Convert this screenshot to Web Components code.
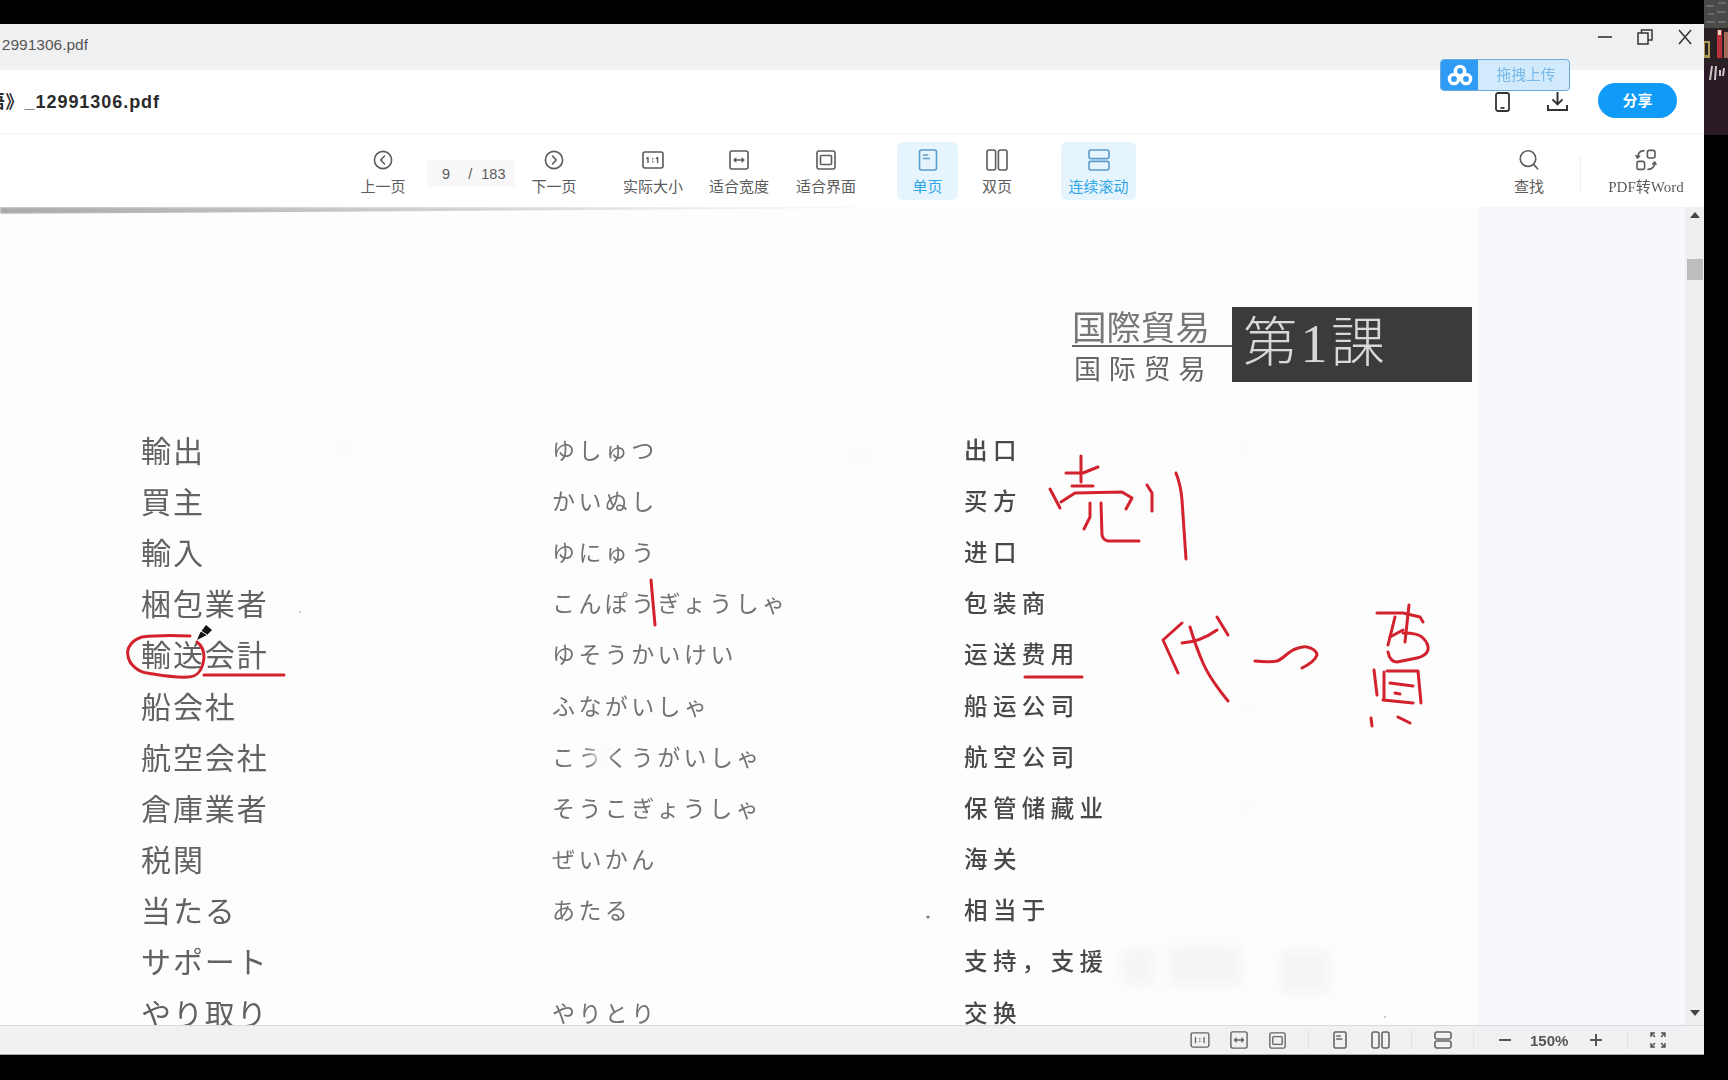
<!DOCTYPE html>
<html lang="zh">
<head>
<meta charset="utf-8">
<title>PDF</title>
<style>
  html, body { margin: 0; height: 1080px; overflow: hidden; background: #000; }
  body { display: flex; align-items: flex-start; font-family: "Liberation Sans", "Noto Sans CJK SC", sans-serif; }
</style>
</head>
<body>
<pdf-window></pdf-window>
<video-thumb></video-thumb>

<script>
const line = 'fill="none" stroke="currentColor" stroke-width="1.6" stroke-linecap="round" stroke-linejoin="round"'
const ICONS = {
  prev: `<svg width="20" height="20" viewBox="0 0 20 20" ${line}><circle cx="10" cy="10" r="8.6"/><path d="M11.5 6 7.8 10l3.7 4"/></svg>`,
  next: `<svg width="20" height="20" viewBox="0 0 20 20" ${line}><circle cx="10" cy="10" r="8.6"/><path d="M8.5 6l3.7 4-3.7 4"/></svg>`,
  actual: `<svg width="22" height="18" viewBox="0 0 22 18" ${line}><rect x="1" y="1" width="20" height="16" rx="2"/><path stroke-width="1.4" d="M6 6.5v5M15.6 6.5v5M10.8 7.4v.4M10.8 10.4v.4M4.8 7.4 6 6.5M14.4 7.4l1.2-.9"/></svg>`,
  fitw: `<svg width="20" height="20" viewBox="0 0 20 20" ${line}><rect x="1" y="1" width="18" height="18" rx="2"/><path stroke-width="1.3" d="M5 10h10M7 8.2 5 10l2 1.8M13 8.2l2 1.8-2 1.8"/></svg>`,
  fit: `<svg width="20" height="20" viewBox="0 0 20 20" ${line}><rect x="1" y="1" width="18" height="18" rx="2"/><rect x="4.5" y="5.5" width="11" height="9" rx="1"/></svg>`,
  single: `<svg width="20" height="22" viewBox="0 0 20 22" ${line}><rect x="1.5" y="1" width="17" height="20" rx="2"/><path d="M5.5 6h4M5.5 9.5h6"/></svg>`,
  double: `<svg width="22" height="22" viewBox="0 0 22 22" ${line}><rect x="1" y="1" width="8.6" height="20" rx="2"/><rect x="12.4" y="1" width="8.6" height="20" rx="2"/></svg>`,
  cont: `<svg width="22" height="22" viewBox="0 0 22 22" ${line}><rect x="1" y="1" width="20" height="8.6" rx="2"/><rect x="1" y="12.4" width="20" height="8.6" rx="2"/></svg>`,
  search: `<svg width="22" height="22" viewBox="0 0 22 22" ${line}><circle cx="10" cy="9.6" r="7.8"/><path d="m15.6 15.4 4 4.4"/></svg>`,
  word: `<svg width="22" height="22" viewBox="0 0 22 22" ${line}><rect x="12.4" y="1.4" width="7.6" height="7.6" rx="2"/><rect x="2" y="12.4" width="7.6" height="8" rx="2"/><path d="M9 1.6C5.6 1.6 3 3.6 2.6 8.6M13 20.4c3.6 0 6.4-2 6.8-7"/><path d="M1 6.6l1.6 2.4 2-2M21 15.4l-1.4-2.2-2 1.8"/></svg>`,
  phone: `<svg width="15" height="20" viewBox="0 0 15 20" fill="none" stroke="#333" stroke-width="1.8"><rect x="1" y="1" width="13" height="18" rx="2"/><path d="M5.5 16h4"/></svg>`,
  download: `<svg width="21" height="19" viewBox="0 0 21 19" fill="none" stroke="#333" stroke-width="2"><path d="M10.5 0v12M5.5 7.4l5 5 5-5M1 13v5h19v-5"/></svg>`,
  cloud: `<svg width="26" height="22" viewBox="0 0 26 22" fill="none" stroke="#fff" stroke-width="3.4"><circle cx="13" cy="7" r="4.6"/><circle cx="7" cy="15" r="4.6"/><circle cx="19" cy="15" r="4.6"/></svg>`,
  min: `<svg width="16" height="16" viewBox="0 0 16 16" fill="none" stroke="#333" stroke-width="1.6"><path d="M1 8h14"/></svg>`,
  restore: `<svg width="16" height="16" viewBox="0 0 16 16" fill="none" stroke="#333" stroke-width="1.5"><rect x="1" y="4" width="10" height="11"/><path d="M4.5 4V1H15v10h-4"/></svg>`,
  close: `<svg width="16" height="16" viewBox="0 0 16 16" fill="none" stroke="#333" stroke-width="1.5"><path d="m2 1 12 14M14 1 2 15"/></svg>`,
  full: `<svg width="16" height="16" viewBox="0 0 16 16" fill="none" stroke="#555" stroke-width="1.5"><path d="M1 5V1h4M1 1l4 4M11 1h4v4M15 1l-4 4M1 11v4h4M1 15l4-4M15 11v4h-4M15 15l-4-4"/></svg>`
}

// one button of the big toolbar: icon on top, label under it
class ToolButton extends HTMLElement {
  connectedCallback () {
    const root = this.attachShadow({ mode: 'open' })
    root.innerHTML = `
      <style>
        :host {
          display: flex;
          flex-direction: column;
          align-items: center;
          box-sizing: border-box;
          height: 58px;
          padding-top: 8px;
          border-radius: 6px;
          color: #5b5b5b;
          font-size: 15px;
        }
        :host([active]) { background: #e5f4fd; color: #2fa7e6; }
        :host([active]) .icon { color: #5c9ccb; }
        .icon { height: 20px; display: flex; align-items: center; justify-content: center; }
        .label { margin-top: 7px; line-height: 20px; white-space: nowrap; }
        :host([serif]) .label { font-family: "Liberation Serif", "Noto Sans CJK SC", serif; font-size: 15px; }
      </style>
      <div class="icon">${ICONS[this.getAttribute('icon')]}</div>
      <div class="label"><slot></slot></div>`
  }
}

class TitleBar extends HTMLElement {
  constructor () {
    super()
    this.attachShadow({ mode: 'open' }).innerHTML = `
      <style>
        :host {
          display: flex;
          height: 46px;
          box-sizing: border-box;
          padding: 5px 11px 0 0;
          background: linear-gradient(#eff0f2 60%, #f2f3f5);
          color: #555;
          font-size: 15.5px;
        }
        .name { width: 88px; height: 32px; display: flex; justify-content: flex-end; align-items: center; overflow: hidden; white-space: nowrap; }
        .ctrl { margin-left: auto; display: flex; gap: 24px; height: 16px; }
        svg { display: block; }
      </style>
      <div class="name"><slot></slot></div>
      <div class="ctrl">${ICONS.min}${ICONS.restore}${ICONS.close}</div>`
  }
}

class FileBar extends HTMLElement {
  constructor () {
    super()
    this.attachShadow({ mode: 'open' }).innerHTML = `
      <style>
        :host {
          display: flex;
          align-items: center;
          position: relative;
          height: 64px;
          box-sizing: border-box;
          padding-right: 27px;
          background: #fff;
          border-bottom: 1px solid #f3f3f3;
        }
        .name {
          width: 160px;
          margin-top: -3px;
          display: flex;
          justify-content: flex-end;
          overflow: hidden;
          white-space: nowrap;
          color: #2b2b2b;
          font-size: 18px;
          font-weight: 700;
          letter-spacing: .95px;
        }
        .side { margin-left: auto; display: flex; align-items: center; }
        .side svg { display: block; }
        .phone { margin-right: 37px; }
        .share {
          width: 79px;
          height: 35px;
          margin: -2px 0 0 30px;
          border-radius: 18px;
          background: #0f9bf7;
          color: #fff;
          font-size: 15px;
          font-weight: 700;
          line-height: 35px;
          text-align: center;
        }
        .upload {
          position: absolute;
          left: 1440px;
          top: -11px;
          width: 130px;
          height: 32px;
          box-sizing: border-box;
          display: flex;
          border: 1px solid #6aa8de;
          border-radius: 4px;
          overflow: hidden;
          background: #d2ebfc;
          color: #78b8e8;
          font-size: 14.8px;
        }
        .upload i { width: 37px; background: #2f9bf5; display: flex; align-items: center; justify-content: center; }
        .upload span { flex: 1; text-align: center; line-height: 30px; padding-left: 5px; white-space: nowrap; }
      </style>
      <div class="name"><slot></slot></div>
      <div class="side">
        <span class="phone">${ICONS.phone}</span>
        ${ICONS.download}
        <div class="share">分享</div>
      </div>
      <div class="upload"><i>${ICONS.cloud}</i><span>拖拽上传</span></div>`
  }
}

class PdfToolbar extends HTMLElement {
  constructor () {
    super()
    this.attachShadow({ mode: 'open' }).innerHTML = `
      <style>
        :host {
          display: flex;
          align-items: flex-start;
          height: 73px;
          box-sizing: border-box;
          padding: 8px 16px 0 353px;
          background: #fff;
        }
        .page {
          width: 88px;
          height: 27px;
          margin: 18px 9px 0 14px;
          display: flex;
          align-items: center;
          box-sizing: border-box;
          padding-left: 15px;
          background: #f8f8f8;
          border-radius: 3px;
          color: #5b5b5b;
          font-size: 14.5px;
          white-space: pre;
          word-spacing: .5px;
        }
        .sep { width: 1px; height: 37px; margin: 13px 23px 0 21px; background: #eee; }
        .grow { flex: 1; }
      </style>
      <tool-button icon="prev" style="width:60px">上一页</tool-button>
      <div class="page">9    /  183</div>
      <tool-button icon="next" style="width:60px">下一页</tool-button>
      <tool-button icon="actual" style="width:72px;margin-left:33px">实际大小</tool-button>
      <tool-button icon="fitw" style="width:80px;margin-left:10px">适合宽度</tool-button>
      <tool-button icon="fit" style="width:80px;margin-left:7px">适合界面</tool-button>
      <tool-button icon="single" active style="width:61px;margin-left:31px">单页</tool-button>
      <tool-button icon="double" style="width:60px;margin-left:9px">双页</tool-button>
      <tool-button icon="cont" active style="width:75px;margin-left:34px">连续滚动</tool-button>
      <div class="grow"></div>
      <tool-button icon="search" style="width:60px">查找</tool-button>
      <div class="sep"></div>
      <tool-button icon="word" serif style="width:84px">PDF转Word</tool-button>`
  }
}

class ChapterHead extends HTMLElement {
  constructor () {
    super()
    this.attachShadow({ mode: 'open' }).innerHTML = `
      <style>
        :host { display: flex; justify-content: flex-end; height: 75px; padding-right: 5px; }
        .names { width: 160px; box-sizing: border-box; }
        .ja {
          height: 38px;
          border-bottom: 2px solid #666;
          color: #777;
          font: 400 34.5px/36px "Noto Sans CJK JP", sans-serif;
          white-space: nowrap;
        }
        .zh {
          padding: 5px 0 0 2px;
          color: #666;
          font: 400 27px/31px "Noto Sans CJK SC", sans-serif;
          letter-spacing: 7.8px;
          white-space: nowrap;
        }
        .no {
          width: 240px;
          box-sizing: border-box;
          padding-left: 11px;
          background: #3b3b3b;
          color: #d8d8d8;
          font: 300 54px/75px "Liberation Serif", "Noto Sans CJK JP", serif;
          letter-spacing: 3.5px;
          white-space: nowrap;
        }
      </style>
      <div class="names">
        <div class="ja" lang="ja">国際貿易</div>
        <div class="zh">国际贸易</div>
      </div>
      <div class="no" lang="ja">第1課</div>`
  }
}

class VocabRow extends HTMLElement {
  constructor () {
    super()
    this.attachShadow({ mode: 'open' }).innerHTML = `
      <style>
        :host {
          display: grid;
          grid-template-columns: 411px 412px 1fr;
          align-items: center;
          height: 51.2px;
          padding-left: 141px;
          white-space: nowrap;
        }
        .word { color: #626262; font: 400 30px/40px "Noto Sans CJK JP", sans-serif; letter-spacing: 1.9px; }
        .kana { color: #727272; font: 400 23px/40px "Noto Sans CJK JP", sans-serif; letter-spacing: 3.4px; }
        .mean { color: #484848; font: 500 23.5px/40px "Noto Sans CJK SC", sans-serif; letter-spacing: 5.4px; }
      </style>
      <div class="word"><slot name="word"></slot></div>
      <div class="kana"><slot name="kana"></slot></div>
      <div class="mean"><slot name="mean"></slot></div>`
  }
}

// teacher's pen marks, drawn in page coordinates
class InkLayer extends HTMLElement {
  constructor () {
    super()
    const marks = [
      // 売
      'M1081 456v26', 'M1066 473l17 0 15-6', 'M1072 486h21',
      'M1050 489l10 19', 'M1061 502l14-9 47-1 10 6-6 11', 'M1090 503v14l-6 12',
      'M1101 503l1 32q1 5 6 6h31',
      // 刂
      'M1147 485l5 8v18', 'M1176 473q5 13 6 27l4 59',
      // 代
      'M1182 623l-19 17 15 33', 'M1182 643q18-1 35-13', 'M1190 627q6 20 13 36t25 38', 'M1217 617l11 18',
      // arrow
      'M1255 661c8 1 16 1 22 0 6-2 10-8 16-11 5-2 10-4 14-3 5 1 10 4 10 8-2 6-9 10-15 13',
      // 费
      'M1377 613h26l17 4 3 5', 'M1409 605l-4 37', 'M1395 617l-7 28', 'M1390 637l13-7',
      'M1403 633q16 0 20 5 6 6 5 12-2 6-11 8l-20 4q-7 0-9-10',
      'M1374 670l3 25', 'M1384 672v28', 'M1387 671h31l3 32', 'M1390 683l23 3', 'M1395 693l5 1', 'M1383 700l30 3',
      'M1371 718l1 8', 'M1398 717l12 6',
      // underlines and circle
      'M1025 677h57',
      'M190 636c-20-1-40 0-48 1-10 3-16 11-14 19 1 8 10 16 19 17 13 2 28 5 41 4 9 0 15-7 16-20 0-7-3-12-7-15', 'M204 675h80',
      'M651 580l4 45'
    ]
    this.attachShadow({ mode: 'open' }).innerHTML = `
      <style>
        :host { position: absolute; inset: 0; display: block; pointer-events: none; }
        svg { display: block; }
      </style>
      <svg width="1477" height="818" viewBox="0 207 1477 818">
        <defs><filter id="b" x="-50%" y="-50%" width="200%" height="200%"><feGaussianBlur stdDeviation="6"/></filter></defs>
        <g fill="#f5f5f5" filter="url(#b)">
          <rect x="1122" y="948" width="32" height="38"/>
          <rect x="1168" y="946" width="74" height="40"/>
          <rect x="1280" y="950" width="50" height="44"/>
        </g>
        <g fill="#fafafa" filter="url(#b)">
          <circle cx="1243" cy="448" r="6"/><circle cx="345" cy="450" r="8"/><circle cx="1245" cy="707" r="6"/>
          <circle cx="1245" cy="808" r="6"/><circle cx="600" cy="755" r="9"/><circle cx="860" cy="455" r="8"/>
        </g>
        <circle cx="928" cy="917" r="1.6" fill="#777"/>
        <circle cx="300" cy="612" r="1" fill="#bbb"/>
        <circle cx="1385" cy="1017" r="1" fill="#bbb"/>
        <g fill="none" stroke="#d2222e" stroke-width="3" stroke-linecap="round" stroke-linejoin="round">
          ${marks.map(d => `<path d="${d}"/>`).join('')}
        </g>
        <path d="M197 640l3-7 6-8 6 5-5 5z" fill="#111"/>
        <path d="M201 631l6 4" stroke="#fff" stroke-width="1"/>
      </svg>`
  }
}

class DocView extends HTMLElement {
  constructor () {
    super()
    this.attachShadow({ mode: 'open' }).innerHTML = `
      <style>
        :host { display: flex; height: 818px; }
        .page {
          position: relative;
          width: 1477px;
          box-sizing: border-box;
          padding-top: 100px;
          overflow: hidden;
          background: #fdfdfd;
        }
        .page::before {
          content: "";
          position: absolute;
          left: 0;
          top: 0;
          width: 900px;
          height: 7px;
          background: linear-gradient(90deg, #aaa, #c4c4c4 35%, #e4e4e4 70%, transparent);
          clip-path: polygon(0 0, 100% 0, 100% 10%, 0 100%);
          filter: blur(1px);
        }
        .rows { margin-top: 41px; }
        .side { width: 208px; background: #f6f8fb; }
        .bar { width: 19px; display: flex; flex-direction: column; align-items: center; background: #efefef; }
        .up, .down { width: 0; height: 0; border: 5px solid transparent; }
        .up { margin-top: 5px; border-top: 0; border-bottom: 6px solid #444; }
        .down { margin-top: auto; margin-bottom: 9px; border-bottom: 0; border-top: 6px solid #444; }
        .thumb { width: 16px; height: 21px; margin-top: 41px; background: #bdbdbd; }
      </style>
      <div class="page">
        <chapter-head></chapter-head>
        <div class="rows"><slot></slot></div>
        <ink-layer></ink-layer>
      </div>
      <div class="side"></div>
      <div class="bar"><div class="up"></div><div class="thumb"></div><div class="down"></div></div>`
  }
}

class StatusBar extends HTMLElement {
  constructor () {
    super()
    this.attachShadow({ mode: 'open' }).innerHTML = `
      <style>
        :host {
          display: flex;
          align-items: center;
          height: 30px;
          box-sizing: border-box;
          padding-left: 1190px;
          background: #f0f1f2;
          border-top: 1px solid #d8dadd;
          border-bottom: 1px solid #a9a9a9;
          color: #666;
        }
        svg { display: block; }
        .sep { width: 1px; height: 20px; background: #e2e3e5; }
        .zoom { width: 43px; color: #555; font-size: 15px; font-weight: 700; white-space: nowrap; }
        .pm { width: 12px; height: 12px; }
      </style>
      <svg width="20" height="16" viewBox="0 0 22 18" ${line}><rect x="1" y="1" width="20" height="16" rx="2"/><path stroke-width="1.5" d="M6 6v6M15.6 6v6M10.8 7.4v.4M10.8 10.4v.4"/></svg>
      <svg style="margin-left:20px" width="18" height="18" viewBox="0 0 20 20" ${line}><rect x="1" y="1" width="18" height="18" rx="2"/><path d="M5 10h10M7 8 5 10l2 2M13 8l2 2-2 2"/></svg>
      <svg style="margin-left:21px" width="17" height="17" viewBox="0 0 20 20" ${line}><rect x="1" y="1" width="18" height="18" rx="2"/><rect x="4.5" y="5.5" width="11" height="9" rx="1"/></svg>
      <div class="sep" style="margin-left:22px"></div>
      <svg style="margin-left:24px" width="14" height="18" viewBox="0 0 14 18" ${line}><rect x="1" y="1" width="12" height="16" rx="1.5"/><path d="M3.8 5h3.4M3.8 8h5"/></svg>
      <svg style="margin-left:24px" width="19" height="18" viewBox="0 0 19 18" ${line}><rect x="1" y="1" width="7" height="16" rx="2"/><rect x="11" y="1" width="7" height="16" rx="2"/></svg>
      <div class="sep" style="margin-left:21px"></div>
      <svg style="margin-left:22px" width="18" height="18" viewBox="0 0 18 18" ${line}><rect x="1" y="1" width="16" height="7" rx="2"/><rect x="1" y="10" width="16" height="7" rx="2"/></svg>
      <div class="sep" style="margin-left:21px"></div>
      <svg class="pm" style="margin-left:25px" viewBox="0 0 12 12" fill="none" stroke="#555" stroke-width="2"><path d="M0 6h12"/></svg>
      <div class="zoom" style="margin-left:19px">150%</div>
      <svg class="pm" style="margin-left:17px" viewBox="0 0 12 12" fill="none" stroke="#555" stroke-width="2"><path d="M0 6h12M6 0v12"/></svg>
      <div class="sep" style="margin-left:25px"></div>
      <span style="margin-left:22px">${ICONS.full}</span>`
  }
}

class PdfWindow extends HTMLElement {
  constructor () {
    super()
    const rows = [
      ['輸出', 'ゆしゅつ', '出口'],
      ['買主', 'かいぬし', '买方'],
      ['輸入', 'ゆにゅう', '进口'],
      ['梱包業者', 'こんぽうぎょうしゃ', '包装商'],
      ['輸送会計', 'ゆそうかいけい', '运送费用'],
      ['船会社', 'ふながいしゃ', '船运公司'],
      ['航空会社', 'こうくうがいしゃ', '航空公司'],
      ['倉庫業者', 'そうこぎょうしゃ', '保管储藏业'],
      ['税関', 'ぜいかん', '海关'],
      ['当たる', 'あたる', '相当于'],
      ['サポート', '', '支持，支援'],
      ['やり取り', 'やりとり', '交换']
    ]
    this.attachShadow({ mode: 'open' }).innerHTML = `
      <style>
        :host {
          display: flex;
          flex-direction: column;
          flex: none;
          width: 1704px;
          margin-top: 24px;
          overflow: hidden;
          filter: blur(.45px);
        }
      </style>
      <title-bar>2991306.pdf</title-bar>
      <file-bar>语》_12991306.pdf</file-bar>
      <pdf-toolbar></pdf-toolbar>
      <doc-view>
        ${rows.map(r => `<vocab-row>
          <span slot="word" lang="ja">${r[0]}</span>
          <span slot="kana" lang="ja">${r[1]}</span>
          <span slot="mean" lang="zh">${r[2]}</span>
        </vocab-row>`).join('')}
      </doc-view>
      <status-bar></status-bar>`
  }
}

// webcam corner, only a strip of it is in frame
class VideoThumb extends HTMLElement {
  constructor () {
    super()
    this.attachShadow({ mode: 'open' }).innerHTML = `
      <style>
        :host { display: block; flex: none; width: 24px; height: 135px; background: #2b1b27; }
        svg { display: block; filter: blur(.6px); }
      </style>
      <svg width="24" height="135" viewBox="0 0 24 135">
        <rect width="24" height="28" fill="#4b4a48"/>
        <path d="M2 6h8M14 3h8M4 14h6M13 12h9M2 22h9M14 22h8" stroke="#6b6a68" stroke-width="2"/>
        <rect y="28" width="24" height="38" fill="#2a2024"/>
        <rect x="0" y="41" width="6" height="17" fill="#b09a55"/>
        <rect x="1" y="43" width="3" height="12" fill="#2a2024"/>
        <rect x="13" y="30" width="5" height="28" fill="#b8323a"/>
        <rect x="14" y="30" width="3" height="5" fill="#e6d6c8"/>
        <rect x="20" y="32" width="4" height="26" fill="#a66a5c"/>
        <path d="M8 66 6 80M12 66l-1 14M16 70v6M20 68l-1 8" stroke="#c9c6c4" stroke-width="2"/>
      </svg>`
  }
}

customElements.define('tool-button', ToolButton)
customElements.define('title-bar', TitleBar)
customElements.define('file-bar', FileBar)
customElements.define('pdf-toolbar', PdfToolbar)
customElements.define('chapter-head', ChapterHead)
customElements.define('vocab-row', VocabRow)
customElements.define('ink-layer', InkLayer)
customElements.define('doc-view', DocView)
customElements.define('status-bar', StatusBar)
customElements.define('video-thumb', VideoThumb)
customElements.define('pdf-window', PdfWindow)
</script>
</body>
</html>
